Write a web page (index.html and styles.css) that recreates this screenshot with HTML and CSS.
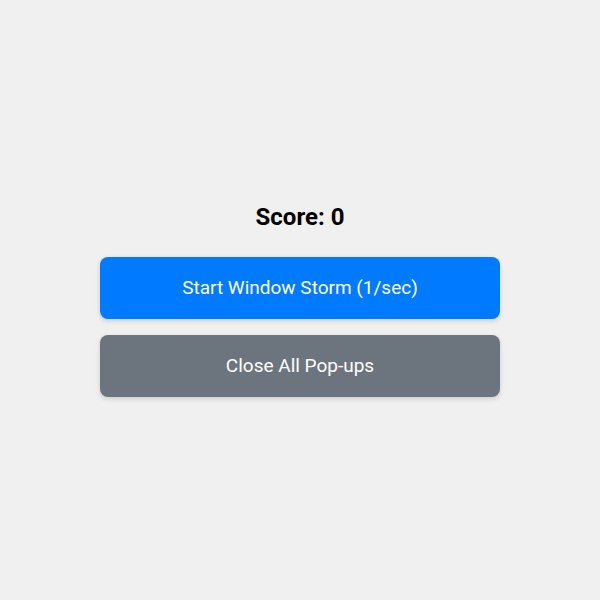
FILE: index.html
```html
<!DOCTYPE html>
<html>
<head>
<meta charset="utf-8">
<link rel="stylesheet" href="styles.css">
</head>
<body>
<div class="app">
  <h2 class="score">Score: 0</h2>
  <button class="btn btn-primary">Start Window Storm (1/sec)</button>
  <button class="btn btn-secondary">Close All Pop-ups</button>
</div>
</body>
</html>
```
FILE: styles.css
```css
html, body {
  margin: 0;
  padding: 0;
  height: 100%;
}
body {
  background: #f0f0f0;
  font-family: Roboto, "Liberation Sans", sans-serif;
  display: flex;
  align-items: center;
  justify-content: center;
}
.app {
  width: 400px;
  display: flex;
  flex-direction: column;
  gap: 16px;
}
.score {
  margin: 0 0 10px 0;
  font-size: 24px;
  font-weight: 700;
  line-height: 28px;
  text-align: center;
  color: #000;
}
.btn {
  border: none;
  border-radius: 8px;
  font-family: inherit;
  font-size: 19px;
  line-height: 22px;
  padding: 20px;
  color: #fff;
  box-shadow: 0 2px 5px rgba(0,0,0,0.15);
  cursor: pointer;
}
.btn-primary { background: #007bff; }
.btn-secondary { background: #6c757d; }
```
